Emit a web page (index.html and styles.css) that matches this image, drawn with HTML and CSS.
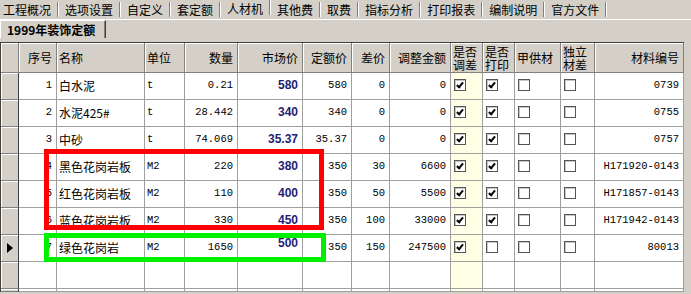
FILE: index.html
```html
<!DOCTYPE html>
<html lang="zh">
<head>
<meta charset="utf-8">
<title>人材机</title>
<link rel="stylesheet" href="styles.css">
</head>
<body>
<div class="app">
  <div class="tabs">
    <div class="tab first">工程概况</div>
    <div class="tab">选项设置</div>
    <div class="tab">自定义</div>
    <div class="tab">套定额</div>
    <div class="tab active">人材机</div>
    <div class="tab">其他费</div>
    <div class="tab">取费</div>
    <div class="tab">指标分析</div>
    <div class="tab">打印报表</div>
    <div class="tab">编制说明</div>
    <div class="tab">官方文件</div>
  </div>
  <div class="subtabs">
    <div class="subtab">1999年装饰定额</div>
  </div>
  <div class="gridwrap">
    <div class="grid">
      <div class="hd"></div>
      <div class="hd r">序号</div>
      <div class="hd">名称</div>
      <div class="hd">单位</div>
      <div class="hd r">数量</div>
      <div class="hd r">市场价</div>
      <div class="hd r">定额价</div>
      <div class="hd r">差价</div>
      <div class="hd r">调整金额</div>
      <div class="hd two"><span>是否</span><span>调差</span></div>
      <div class="hd two"><span>是否</span><span>打印</span></div>
      <div class="hd">甲供材</div>
      <div class="hd two"><span>独立</span><span>材差</span></div>
      <div class="hd r">材料编号</div>

      <div class="rh"></div>
      <div class="c r m">1</div><div class="c">白水泥</div><div class="c m">t</div><div class="c r m">0.21</div><div class="c r p">580</div><div class="c r m">580</div><div class="c r m">0</div><div class="c r m">0</div>
      <div class="c y"><span class="cb on"></span></div><div class="c"><span class="cb on"></span></div><div class="c"><span class="cb"></span></div><div class="c"><span class="cb"></span></div><div class="c r m">0739</div>

      <div class="rh"></div>
      <div class="c r m">2</div><div class="c">水泥425#</div><div class="c m">t</div><div class="c r m">28.442</div><div class="c r p">340</div><div class="c r m">340</div><div class="c r m">0</div><div class="c r m">0</div>
      <div class="c y"><span class="cb on"></span></div><div class="c"><span class="cb on"></span></div><div class="c"><span class="cb"></span></div><div class="c"><span class="cb"></span></div><div class="c r m">0755</div>

      <div class="rh"></div>
      <div class="c r m">3</div><div class="c">中砂</div><div class="c m">t</div><div class="c r m">74.069</div><div class="c r p">35.37</div><div class="c r m">35.37</div><div class="c r m">0</div><div class="c r m">0</div>
      <div class="c y"><span class="cb on"></span></div><div class="c"><span class="cb on"></span></div><div class="c"><span class="cb"></span></div><div class="c"><span class="cb"></span></div><div class="c r m">0757</div>

      <div class="rh"></div>
      <div class="c r m">4</div><div class="c">黑色花岗岩板</div><div class="c m">M2</div><div class="c r m">220</div><div class="c r p">380</div><div class="c r m">350</div><div class="c r m">30</div><div class="c r m">6600</div>
      <div class="c y"><span class="cb on"></span></div><div class="c"><span class="cb on"></span></div><div class="c"><span class="cb"></span></div><div class="c"><span class="cb"></span></div><div class="c r m">H171920-0143</div>

      <div class="rh"></div>
      <div class="c r m">5</div><div class="c">红色花岗岩板</div><div class="c m">M2</div><div class="c r m">110</div><div class="c r p">400</div><div class="c r m">350</div><div class="c r m">50</div><div class="c r m">5500</div>
      <div class="c y"><span class="cb on"></span></div><div class="c"><span class="cb on"></span></div><div class="c"><span class="cb"></span></div><div class="c"><span class="cb"></span></div><div class="c r m">H171857-0143</div>

      <div class="rh"></div>
      <div class="c r m">6</div><div class="c">蓝色花岗岩板</div><div class="c m">M2</div><div class="c r m">330</div><div class="c r p">450</div><div class="c r m">350</div><div class="c r m">100</div><div class="c r m">33000</div>
      <div class="c y"><span class="cb on"></span></div><div class="c"><span class="cb on"></span></div><div class="c"><span class="cb"></span></div><div class="c"><span class="cb"></span></div><div class="c r m">H171942-0143</div>

      <div class="rh cur"><span class="arrow"></span></div>
      <div class="c r m">7</div><div class="c">绿色花岗岩</div><div class="c m">M2</div><div class="c r m">1650</div><div class="c r p up">500</div><div class="c r m">350</div><div class="c r m">150</div><div class="c r m">247500</div>
      <div class="c y"><span class="cb on"></span></div><div class="c"><span class="cb"></span></div><div class="c"><span class="cb"></span></div><div class="c"><span class="cb"></span></div><div class="c r m">80013</div>

      <div class="rh"></div>
      <div class="c"></div><div class="c"></div><div class="c"></div><div class="c"></div><div class="c"></div><div class="c"></div><div class="c"></div><div class="c"></div>
      <div class="c y"></div><div class="c"></div><div class="c"></div><div class="c"></div><div class="c"></div>

      <div class="rh"></div>
      <div class="c"></div><div class="c"></div><div class="c"></div><div class="c"></div><div class="c"></div><div class="c"></div><div class="c"></div><div class="c"></div>
      <div class="c y"></div><div class="c"></div><div class="c"></div><div class="c"></div><div class="c"></div>
    </div>
    <div class="mark red"></div>
    <div class="mark green"></div>
  </div>
</div>
</body>
</html>
```
FILE: styles.css
```css
html, body {
  margin: 0;
  padding: 0;
}
body {
  background: #d4d0c8;
  font: 12px "Noto Sans CJK SC", sans-serif;
  color: #000;
  width: 691px;
  height: 294px;
  overflow: hidden;
}
.app {
  display: flex;
  flex-direction: column;
}
.tabs {
  display: flex;
  height: 19px;
  border-bottom: 1px solid #fff;
}
.tab {
  display: flex;
  align-items: center;
  padding-left: 6px;
  line-height: 18px;
  white-space: nowrap;
}
.tab.first {
  padding-left: 3px;
}
.tab::after {
  content: "";
  width: 0;
  height: 15px;
  margin-left: 6px;
  border-left: 1px solid #808080;
  border-right: 1px solid #fff;
}
.tab.active {
  align-items: flex-start;
}
.subtabs {
  display: flex;
  height: 22px;
}
.subtab {
  height: 17px;
  padding: 0 10px 0 6px;
  font-weight: bold;
  line-height: 17px;
  border-top: 1px solid #fff;
  border-left: 1px solid #fff;
  border-right: 1px solid #404040;
  box-shadow: inset -1px 0 0 #808080;
  white-space: nowrap;
}
.gridwrap {
  position: relative;
}
.grid {
  display: grid;
  grid-template-columns: 18px 38px 88px 40px 53px 65px 49px 38px 61px 32px 32px 46px 34px 89px;
  grid-template-rows: 30px repeat(8, 27px);
  width: 683px;
  border-top: 1px solid #404040;
  border-left: 1px solid #404040;
}
.grid > div {
  box-sizing: border-box;
  display: flex;
  align-items: center;
  overflow: hidden;
  white-space: nowrap;
}
.hd {
  background: #d4d0c8;
  border-right: 1px solid #808080;
  border-bottom: 1px solid #808080;
  box-shadow: inset 1px 1px 0 #fff;
  padding: 0 3px 0 2px;
  line-height: 15px;
}
.grid > .hd.two {
  flex-direction: column;
  align-items: flex-start;
  justify-content: center;
  line-height: 13px;
}
.hd.two span {
  display: block;
  height: 13px;
}
.hd.r {
  justify-content: flex-end;
  padding-right: 4px;
}
.rh {
  background: #d4d0c8;
  border-right: 1px solid #404040;
  border-bottom: 1px solid #808080;
  box-shadow: inset 1px 1px 0 #fff;
}
.c {
  background: #fff;
  border-right: 1px solid #a0a0a0;
  border-bottom: 1px solid #a0a0a0;
  padding: 0 3px 2px 2px;
}
.c.r {
  justify-content: flex-end;
  padding-right: 4px;
}
.c.y {
  background: #ffffe6;
}
.m {
  font-family: "Liberation Mono", monospace;
  font-size: 10.5px;
}
.p {
  font: bold 12px "Liberation Sans", sans-serif;
  color: #1f1f72;
}
.p.up {
  align-items: flex-start !important;
  padding-top: 1px;
}
.cb {
  box-sizing: border-box;
  width: 12px;
  height: 12px;
  margin-left: 1px;
  border: 1px solid #555;
  background: #fff;
  box-shadow: inset 1px 1px 0 #c8c8c8;
  position: relative;
}
.cb.on::after {
  content: "";
  position: absolute;
  left: 3px;
  top: 1px;
  width: 2px;
  height: 5px;
  border-right: 2px solid #000;
  border-bottom: 2px solid #000;
  transform: rotate(40deg);
}
.cur {
  justify-content: center;
}
.arrow {
  width: 0;
  height: 0;
  border-top: 5px solid transparent;
  border-bottom: 5px solid transparent;
  border-left: 6px solid #000;
}
.mark {
  position: absolute;
  box-sizing: border-box;
  border: 5px solid;
}
.mark.red {
  left: 44px;
  top: 107px;
  width: 280px;
  height: 81px;
  border-color: #ff0000;
}
.mark.green {
  left: 44px;
  top: 191px;
  width: 282px;
  height: 29px;
  border-color: #00f000;
}
```
